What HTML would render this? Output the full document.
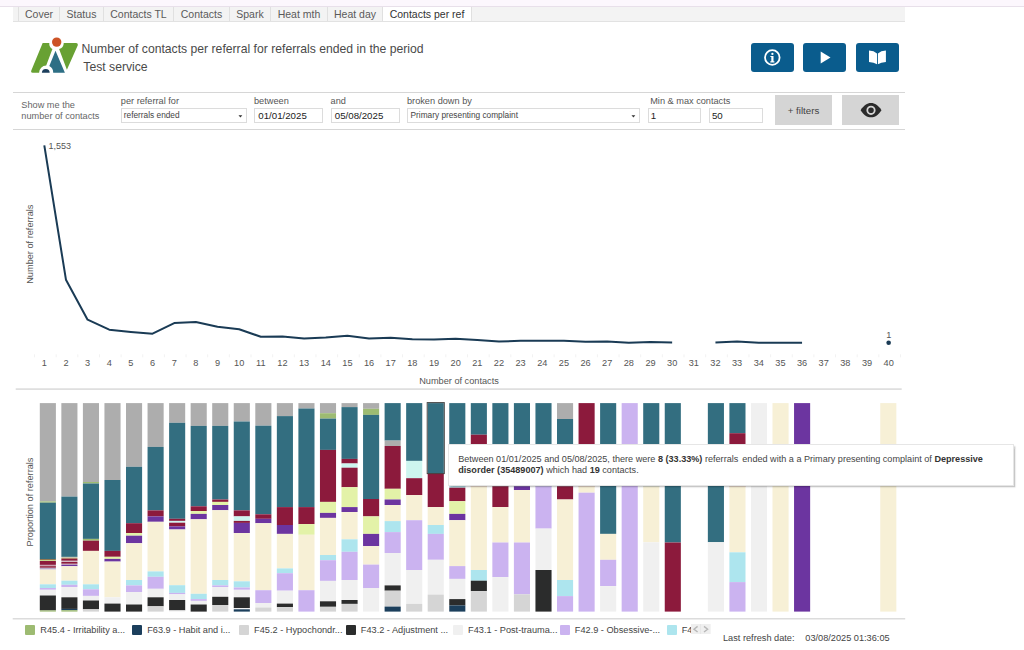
<!DOCTYPE html>
<html><head><meta charset="utf-8">
<style>
html,body{margin:0;padding:0;}
body{width:1024px;height:650px;overflow:hidden;position:relative;background:#fff;font-family:"Liberation Sans",sans-serif;}
.abs{position:absolute;}
#strip{position:absolute;left:0;top:0;width:1024px;height:6px;background:#fcf7fd;border-bottom:1px solid #e8e0ea;}
#tabbar{position:absolute;left:13px;top:7px;width:891.5px;height:13.6px;background:#f3f3f3;border-bottom:1px solid #e2e2e2;}
.tab{position:absolute;top:7px;height:13.6px;line-height:14px;font-size:10.5px;color:#5a5a5a;text-align:center;box-sizing:border-box;border-left:1px solid #e0e0e0;white-space:nowrap;}
.tab.act{background:#fff;color:#333;border-right:1px solid #e0e0e0;height:14.3px;}
.title{position:absolute;left:81.5px;font-size:12.2px;color:#4a4a4a;white-space:nowrap;}
.btn{position:absolute;top:43.1px;width:43px;height:29px;background:#0a5c8d;border-radius:3px;}
.hline{position:absolute;left:13px;width:892px;height:1px;background:#d6d6d6;}
.flab{position:absolute;font-size:9.2px;color:#555;white-space:nowrap;}
.inp{position:absolute;top:108.3px;height:14.6px;box-sizing:border-box;border:1px solid #dcdcdc;background:#fff;font-size:9.7px;color:#222;line-height:13px;padding-left:3px;white-space:nowrap;overflow:hidden;}
.sel{font-size:8.3px;color:#444;padding-left:2.5px;line-height:13.8px;}
.gbtn{position:absolute;top:95.3px;height:29.3px;background:#d5d5d5;}
.lsq{position:absolute;top:624.8px;width:10px;height:10px;border-radius:1px;}
.ltx{position:absolute;top:624.6px;font-size:9.2px;color:#444;white-space:nowrap;line-height:11px;}
svg text{font-family:"Liberation Sans",sans-serif;}
</style></head><body>
<div id="strip"></div>
<div id="tabbar"></div>
<div class="tab" style="left:18.00px;width:41.00px">Cover</div>
<div class="tab" style="left:59.00px;width:44.00px">Status</div>
<div class="tab" style="left:103.00px;width:70.00px">Contacts TL</div>
<div class="tab" style="left:173.00px;width:56.00px">Contacts</div>
<div class="tab" style="left:229.00px;width:41.00px">Spark</div>
<div class="tab" style="left:270.00px;width:57.00px">Heat mth</div>
<div class="tab" style="left:327.00px;width:55.00px">Heat day</div>
<div class="tab act" style="left:382.00px;width:90.00px">Contacts per ref</div>

<svg class="abs" style="left:0;top:0" width="120" height="90" viewBox="0 0 120 90">
  <path d="M42.66,42.9 L49.3,42.9 A6.6,6.6 0 0 0 52.4,49.1 L46.2,65.5 A7.3,7.3 0 0 0 39.1,72.8 L32.6,72.8 Q30.6,72.8 31.3,70.6 Z" fill="#68a133"/>
  <path d="M63.75,42.9 L76.3,42.9 Q78.4,43.2 77.8,45.2 L66.9,69.8 L59.1,49.1 A6.6,6.6 0 0 0 63.75,42.9 Z" fill="#68a133"/>
  <path d="M55.5,50.7 L64.9,72.8 L53.2,72.8 A7.4,7.4 0 0 0 49.3,66.1 Z" fill="#2e6f85"/>
  <path d="M41.9,72.8 A3.9,3.9 0 0 1 49.7,72.8 Z" fill="#1c3f5c"/>
  <circle cx="56.7" cy="42.1" r="4.7" fill="#cd5326"/>
</svg>
<div class="title" style="top:42px">Number of contacts per referral for referrals ended in the period</div>
<div class="title" style="top:60px;left:83.3px">Test service</div>
<div class="btn" style="left:750.8px"><svg width="43" height="29" viewBox="0 0 43 29"><circle cx="21.3" cy="14.5" r="7.3" fill="none" stroke="#fff" stroke-width="1.8"/><circle cx="21.4" cy="10.9" r="1.15" fill="#fff"/><path d="M19.4,13 L22.5,13 L22.5,18.3 L23.4,18.3 L23.4,19.4 L19.3,19.4 L19.3,18.3 L20.3,18.3 L20.3,14 L19.4,14 Z" fill="#fff"/></svg></div>
<div class="btn" style="left:803.2px"><svg width="43" height="29" viewBox="0 0 43 29"><path d="M17.7,8.4 L27.5,14.5 L17.7,20.6 Z" fill="#fff"/></svg></div>
<div class="btn" style="left:855.9px"><svg width="43" height="29" viewBox="0 0 43 29"><path d="M13,7.5 Q18,7.6 21,10.4 L21,21.3 Q18,19 13,18.9 Z M21.9,10.4 Q24.9,7.6 29.9,7.5 L29.9,18.9 Q24.9,19 21.9,21.3 Z" fill="#fff"/></svg></div>
<div class="hline" style="top:92px"></div>
<div class="hline" style="top:129px"></div>
<div class="flab" style="left:21.3px;top:99.5px;line-height:11px;color:#666">Show me the<br>number of contacts</div>
<div class="flab" style="left:120.8px;top:95.5px">per referral for</div>
<div class="inp sel" style="left:121px;width:126px;padding-left:1.8px">referrals ended<svg style="position:absolute;left:116.3px;top:6.2px" width="5" height="3" viewBox="0 0 5 3"><path d="M0.5,0.3 L4.3,0.3 L2.4,2.4 Z" fill="#333"/></svg></div>
<div class="flab" style="left:254px;top:95.5px">between</div>
<div class="inp" style="left:254.3px;width:69px">01/01/2025</div>
<div class="flab" style="left:330.6px;top:95.5px">and</div>
<div class="inp" style="left:330.8px;width:69px">05/08/2025</div>
<div class="flab" style="left:407px;top:95.5px">broken down by</div>
<div class="inp sel" style="left:407px;width:233.3px">Primary presenting complaint<svg style="position:absolute;left:223.3px;top:6.2px" width="5" height="3" viewBox="0 0 5 3"><path d="M0.5,0.3 L4.3,0.3 L2.4,2.4 Z" fill="#333"/></svg></div>
<div class="flab" style="left:650.2px;top:95.5px">Min &amp; max contacts</div>
<div class="inp" style="left:647.6px;width:53.8px;padding-left:2.2px">1</div>
<div class="inp" style="left:708.7px;width:54px;padding-left:2.2px">50</div>
<div class="gbtn" style="left:775px;width:57px"><div style="position:absolute;left:0;right:0;top:9.4px;text-align:center;font-size:9.7px;color:#444">+ filters</div></div>
<div class="gbtn" style="left:842px;width:57px"><svg width="57" height="29" viewBox="0 0 57 29"><path d="M18.6,15.2 C22,10.2 25,8.1 29,8.1 C33,8.1 36,10.2 39.5,15.2 C36,20.3 33,22.3 29,22.3 C25,22.3 22,20.3 18.6,15.2 Z" fill="#2b2b2b"/><circle cx="29" cy="15.3" r="3.7" fill="none" stroke="#d5d5d5" stroke-width="1.8"/></svg></div>

<svg class="abs" style="left:0;top:0" width="1024" height="650" viewBox="0 0 1024 650">
<g fill="#555" font-size="9.2">
<text x="44.30" y="365.7" text-anchor="middle">1</text>
<text x="65.95" y="365.7" text-anchor="middle">2</text>
<text x="87.60" y="365.7" text-anchor="middle">3</text>
<text x="109.25" y="365.7" text-anchor="middle">4</text>
<text x="130.90" y="365.7" text-anchor="middle">5</text>
<text x="152.55" y="365.7" text-anchor="middle">6</text>
<text x="174.20" y="365.7" text-anchor="middle">7</text>
<text x="195.85" y="365.7" text-anchor="middle">8</text>
<text x="217.50" y="365.7" text-anchor="middle">9</text>
<text x="239.15" y="365.7" text-anchor="middle">10</text>
<text x="260.80" y="365.7" text-anchor="middle">11</text>
<text x="282.45" y="365.7" text-anchor="middle">12</text>
<text x="304.10" y="365.7" text-anchor="middle">13</text>
<text x="325.75" y="365.7" text-anchor="middle">14</text>
<text x="347.40" y="365.7" text-anchor="middle">15</text>
<text x="369.05" y="365.7" text-anchor="middle">16</text>
<text x="390.70" y="365.7" text-anchor="middle">17</text>
<text x="412.35" y="365.7" text-anchor="middle">18</text>
<text x="434.00" y="365.7" text-anchor="middle">19</text>
<text x="455.65" y="365.7" text-anchor="middle">20</text>
<text x="477.30" y="365.7" text-anchor="middle">21</text>
<text x="498.95" y="365.7" text-anchor="middle">22</text>
<text x="520.60" y="365.7" text-anchor="middle">23</text>
<text x="542.25" y="365.7" text-anchor="middle">24</text>
<text x="563.90" y="365.7" text-anchor="middle">25</text>
<text x="585.55" y="365.7" text-anchor="middle">26</text>
<text x="607.20" y="365.7" text-anchor="middle">27</text>
<text x="628.85" y="365.7" text-anchor="middle">28</text>
<text x="650.50" y="365.7" text-anchor="middle">29</text>
<text x="672.15" y="365.7" text-anchor="middle">30</text>
<text x="693.80" y="365.7" text-anchor="middle">31</text>
<text x="715.45" y="365.7" text-anchor="middle">32</text>
<text x="737.10" y="365.7" text-anchor="middle">33</text>
<text x="758.75" y="365.7" text-anchor="middle">34</text>
<text x="780.40" y="365.7" text-anchor="middle">35</text>
<text x="802.05" y="365.7" text-anchor="middle">36</text>
<text x="823.70" y="365.7" text-anchor="middle">37</text>
<text x="845.35" y="365.7" text-anchor="middle">38</text>
<text x="867.00" y="365.7" text-anchor="middle">39</text>
<text x="888.65" y="365.7" text-anchor="middle">40</text>
<text x="48.4" y="148.6" text-anchor="start" font-size="9">1,553</text>
<text x="888.8" y="337.5" text-anchor="middle">1</text>
<text x="459" y="383.9" text-anchor="middle">Number of contacts</text>
<text transform="translate(32.6,244.2) rotate(-90)" text-anchor="middle">Number of referrals</text>
<text transform="translate(33.4,502) rotate(-90)" text-anchor="middle">Proportion of referrals</text>
</g>
<rect x="34.00" y="354.3" width="1" height="3" fill="#f2f2f2"/>
<rect x="55.65" y="354.3" width="1" height="3" fill="#f2f2f2"/>
<rect x="77.30" y="354.3" width="1" height="3" fill="#f2f2f2"/>
<rect x="98.95" y="354.3" width="1" height="3" fill="#f2f2f2"/>
<rect x="120.60" y="354.3" width="1" height="3" fill="#f2f2f2"/>
<rect x="142.25" y="354.3" width="1" height="3" fill="#f2f2f2"/>
<rect x="163.90" y="354.3" width="1" height="3" fill="#f2f2f2"/>
<rect x="185.55" y="354.3" width="1" height="3" fill="#f2f2f2"/>
<rect x="207.20" y="354.3" width="1" height="3" fill="#f2f2f2"/>
<rect x="228.85" y="354.3" width="1" height="3" fill="#f2f2f2"/>
<rect x="250.50" y="354.3" width="1" height="3" fill="#f2f2f2"/>
<rect x="272.15" y="354.3" width="1" height="3" fill="#f2f2f2"/>
<rect x="293.80" y="354.3" width="1" height="3" fill="#f2f2f2"/>
<rect x="315.45" y="354.3" width="1" height="3" fill="#f2f2f2"/>
<rect x="337.10" y="354.3" width="1" height="3" fill="#f2f2f2"/>
<rect x="358.75" y="354.3" width="1" height="3" fill="#f2f2f2"/>
<rect x="380.40" y="354.3" width="1" height="3" fill="#f2f2f2"/>
<rect x="402.05" y="354.3" width="1" height="3" fill="#f2f2f2"/>
<rect x="423.70" y="354.3" width="1" height="3" fill="#f2f2f2"/>
<rect x="445.35" y="354.3" width="1" height="3" fill="#f2f2f2"/>
<rect x="467.00" y="354.3" width="1" height="3" fill="#f2f2f2"/>
<rect x="488.65" y="354.3" width="1" height="3" fill="#f2f2f2"/>
<rect x="510.30" y="354.3" width="1" height="3" fill="#f2f2f2"/>
<rect x="531.95" y="354.3" width="1" height="3" fill="#f2f2f2"/>
<rect x="553.60" y="354.3" width="1" height="3" fill="#f2f2f2"/>
<rect x="575.25" y="354.3" width="1" height="3" fill="#f2f2f2"/>
<rect x="596.90" y="354.3" width="1" height="3" fill="#f2f2f2"/>
<rect x="618.55" y="354.3" width="1" height="3" fill="#f2f2f2"/>
<rect x="640.20" y="354.3" width="1" height="3" fill="#f2f2f2"/>
<rect x="661.85" y="354.3" width="1" height="3" fill="#f2f2f2"/>
<rect x="683.50" y="354.3" width="1" height="3" fill="#f2f2f2"/>
<rect x="705.15" y="354.3" width="1" height="3" fill="#f2f2f2"/>
<rect x="726.80" y="354.3" width="1" height="3" fill="#f2f2f2"/>
<rect x="748.45" y="354.3" width="1" height="3" fill="#f2f2f2"/>
<rect x="770.10" y="354.3" width="1" height="3" fill="#f2f2f2"/>
<rect x="791.75" y="354.3" width="1" height="3" fill="#f2f2f2"/>
<rect x="813.40" y="354.3" width="1" height="3" fill="#f2f2f2"/>
<rect x="835.05" y="354.3" width="1" height="3" fill="#f2f2f2"/>
<rect x="856.70" y="354.3" width="1" height="3" fill="#f2f2f2"/>
<rect x="878.35" y="354.3" width="1" height="3" fill="#f2f2f2"/>
<rect x="900.00" y="354.3" width="1" height="3" fill="#f2f2f2"/>
<polyline points="44.30,145.3 65.95,279.7 87.60,319.7 109.25,329.7 130.90,331.9 152.55,333.7 174.20,323.1 195.85,321.9 217.50,326.8 239.15,329.2 260.80,336.8 282.45,336.4 304.10,338.4 325.75,337.5 347.40,335.8 369.05,338.4 390.70,337.8 412.35,339.3 434.00,339.6 455.65,338.7 477.30,339.9 498.95,341.6 520.60,340.8 542.25,340.8 563.90,340.8 585.55,341.8 607.20,341.4 628.85,342.8 650.50,342.1 672.15,342.5" fill="none" stroke="#1a3b55" stroke-width="2" stroke-linejoin="round"/>
<polyline points="715.45,342.5 737.10,341.4 758.75,342.8 780.40,342.8 802.05,342.8" fill="none" stroke="#1a3b55" stroke-width="2" stroke-linejoin="round"/>
<circle cx="888.65" cy="342.8" r="2.3" fill="#1a3b55"/>
<rect x="15.7" y="388.3" width="886" height="1.6" fill="#dcdcdc"/>
<rect x="39.80" y="403.10" width="16.1" height="98.30" fill="#adadad"/>
<rect x="39.80" y="501.40" width="16.1" height="1.30" fill="#9dbb72"/>
<rect x="39.80" y="502.70" width="16.1" height="56.40" fill="#336e80"/>
<rect x="39.80" y="559.10" width="16.1" height="0.90" fill="#8a6a40"/>
<rect x="39.80" y="560.00" width="16.1" height="1.00" fill="#c8d890"/>
<rect x="39.80" y="561.00" width="16.1" height="3.90" fill="#8c1a3c"/>
<rect x="39.80" y="564.90" width="16.1" height="1.10" fill="#c8a0b0"/>
<rect x="39.80" y="566.00" width="16.1" height="1.90" fill="#a04058"/>
<rect x="39.80" y="567.90" width="16.1" height="1.70" fill="#b8a8c8"/>
<rect x="39.80" y="569.60" width="16.1" height="14.70" fill="#f7f0d6"/>
<rect x="39.80" y="584.30" width="16.1" height="3.70" fill="#ade5ee"/>
<rect x="39.80" y="588.00" width="16.1" height="1.80" fill="#cbb3f0"/>
<rect x="39.80" y="589.80" width="16.1" height="5.70" fill="#f0f0f0"/>
<rect x="39.80" y="595.50" width="16.1" height="14.90" fill="#2b2c2c"/>
<rect x="39.80" y="610.40" width="16.1" height="1.20" fill="#9dbb72"/>
<rect x="61.35" y="403.10" width="16.1" height="93.50" fill="#adadad"/>
<rect x="61.35" y="496.60" width="16.1" height="60.30" fill="#336e80"/>
<rect x="61.35" y="556.90" width="16.1" height="1.10" fill="#c8c8b0"/>
<rect x="61.35" y="558.00" width="16.1" height="0.90" fill="#b08060"/>
<rect x="61.35" y="558.90" width="16.1" height="1.90" fill="#8c1a3c"/>
<rect x="61.35" y="560.80" width="16.1" height="1.10" fill="#d8c8d0"/>
<rect x="61.35" y="561.90" width="16.1" height="1.90" fill="#8c1a3c"/>
<rect x="61.35" y="563.80" width="16.1" height="0.90" fill="#d0b0b8"/>
<rect x="61.35" y="564.70" width="16.1" height="1.50" fill="#6c35a0"/>
<rect x="61.35" y="566.20" width="16.1" height="14.50" fill="#f7f0d6"/>
<rect x="61.35" y="580.70" width="16.1" height="4.10" fill="#ade5ee"/>
<rect x="61.35" y="584.80" width="16.1" height="2.20" fill="#cbb3f0"/>
<rect x="61.35" y="587.00" width="16.1" height="10.30" fill="#f0f0f0"/>
<rect x="61.35" y="597.30" width="16.1" height="11.60" fill="#2b2c2c"/>
<rect x="61.35" y="608.90" width="16.1" height="1.30" fill="#1c3f5c"/>
<rect x="61.35" y="610.20" width="16.1" height="1.40" fill="#9dbb72"/>
<rect x="82.90" y="403.10" width="16.1" height="78.90" fill="#adadad"/>
<rect x="82.90" y="482.00" width="16.1" height="1.50" fill="#9dbb72"/>
<rect x="82.90" y="483.50" width="16.1" height="55.40" fill="#336e80"/>
<rect x="82.90" y="538.90" width="16.1" height="1.80" fill="#9dbb72"/>
<rect x="82.90" y="540.70" width="16.1" height="10.20" fill="#8c1a3c"/>
<rect x="82.90" y="550.90" width="16.1" height="33.40" fill="#f7f0d6"/>
<rect x="82.90" y="584.30" width="16.1" height="5.00" fill="#ade5ee"/>
<rect x="82.90" y="589.30" width="16.1" height="6.60" fill="#cbb3f0"/>
<rect x="82.90" y="595.90" width="16.1" height="4.60" fill="#f0f0f0"/>
<rect x="82.90" y="600.50" width="16.1" height="8.80" fill="#2b2c2c"/>
<rect x="82.90" y="609.30" width="16.1" height="2.30" fill="#d5d5d5"/>
<rect x="104.45" y="403.10" width="16.1" height="76.90" fill="#adadad"/>
<rect x="104.45" y="480.00" width="16.1" height="70.90" fill="#336e80"/>
<rect x="104.45" y="550.90" width="16.1" height="5.90" fill="#8c1a3c"/>
<rect x="104.45" y="556.80" width="16.1" height="2.10" fill="#e3f2a8"/>
<rect x="104.45" y="558.90" width="16.1" height="2.70" fill="#6c35a0"/>
<rect x="104.45" y="561.60" width="16.1" height="35.70" fill="#f7f0d6"/>
<rect x="104.45" y="597.30" width="16.1" height="6.30" fill="#f0f0f0"/>
<rect x="104.45" y="603.60" width="16.1" height="8.00" fill="#2b2c2c"/>
<rect x="126.00" y="403.10" width="16.1" height="63.70" fill="#adadad"/>
<rect x="126.00" y="466.80" width="16.1" height="56.40" fill="#336e80"/>
<rect x="126.00" y="523.20" width="16.1" height="9.80" fill="#8c1a3c"/>
<rect x="126.00" y="533.00" width="16.1" height="2.70" fill="#e3f2a8"/>
<rect x="126.00" y="535.70" width="16.1" height="7.50" fill="#6c35a0"/>
<rect x="126.00" y="543.20" width="16.1" height="36.80" fill="#f7f0d6"/>
<rect x="126.00" y="580.00" width="16.1" height="5.40" fill="#ade5ee"/>
<rect x="126.00" y="585.40" width="16.1" height="6.60" fill="#cbb3f0"/>
<rect x="126.00" y="592.00" width="16.1" height="12.50" fill="#f0f0f0"/>
<rect x="126.00" y="604.50" width="16.1" height="7.10" fill="#2b2c2c"/>
<rect x="147.55" y="403.10" width="16.1" height="43.80" fill="#adadad"/>
<rect x="147.55" y="446.90" width="16.1" height="63.50" fill="#336e80"/>
<rect x="147.55" y="510.40" width="16.1" height="6.00" fill="#8c1a3c"/>
<rect x="147.55" y="516.40" width="16.1" height="5.40" fill="#6c35a0"/>
<rect x="147.55" y="521.80" width="16.1" height="49.60" fill="#f7f0d6"/>
<rect x="147.55" y="571.40" width="16.1" height="5.40" fill="#ade5ee"/>
<rect x="147.55" y="576.80" width="16.1" height="12.00" fill="#cbb3f0"/>
<rect x="147.55" y="588.80" width="16.1" height="8.50" fill="#f0f0f0"/>
<rect x="147.55" y="597.30" width="16.1" height="9.00" fill="#2b2c2c"/>
<rect x="147.55" y="606.30" width="16.1" height="5.30" fill="#d5d5d5"/>
<rect x="169.10" y="403.10" width="16.1" height="19.70" fill="#adadad"/>
<rect x="169.10" y="422.80" width="16.1" height="96.00" fill="#336e80"/>
<rect x="169.10" y="518.80" width="16.1" height="2.10" fill="#8c1a3c"/>
<rect x="169.10" y="520.90" width="16.1" height="1.80" fill="#cdf5ef"/>
<rect x="169.10" y="522.70" width="16.1" height="3.70" fill="#8c1a3c"/>
<rect x="169.10" y="526.40" width="16.1" height="3.10" fill="#6c35a0"/>
<rect x="169.10" y="529.50" width="16.1" height="55.70" fill="#f7f0d6"/>
<rect x="169.10" y="585.20" width="16.1" height="7.70" fill="#ade5ee"/>
<rect x="169.10" y="592.90" width="16.1" height="1.40" fill="#cbb3f0"/>
<rect x="169.10" y="594.30" width="16.1" height="5.70" fill="#f0f0f0"/>
<rect x="169.10" y="600.00" width="16.1" height="10.40" fill="#2b2c2c"/>
<rect x="169.10" y="610.40" width="16.1" height="1.20" fill="#f0f0f0"/>
<rect x="190.65" y="403.10" width="16.1" height="22.80" fill="#adadad"/>
<rect x="190.65" y="425.90" width="16.1" height="80.40" fill="#336e80"/>
<rect x="190.65" y="506.30" width="16.1" height="4.80" fill="#8c1a3c"/>
<rect x="190.65" y="511.10" width="16.1" height="2.80" fill="#e3f2a8"/>
<rect x="190.65" y="513.90" width="16.1" height="5.40" fill="#6c35a0"/>
<rect x="190.65" y="519.30" width="16.1" height="74.50" fill="#f7f0d6"/>
<rect x="190.65" y="593.80" width="16.1" height="5.30" fill="#ade5ee"/>
<rect x="190.65" y="599.10" width="16.1" height="1.80" fill="#cbb3f0"/>
<rect x="190.65" y="600.90" width="16.1" height="3.60" fill="#f0f0f0"/>
<rect x="190.65" y="604.50" width="16.1" height="7.10" fill="#2b2c2c"/>
<rect x="212.20" y="403.10" width="16.1" height="22.80" fill="#adadad"/>
<rect x="212.20" y="425.90" width="16.1" height="73.60" fill="#336e80"/>
<rect x="212.20" y="499.50" width="16.1" height="2.40" fill="#8c1a3c"/>
<rect x="212.20" y="501.90" width="16.1" height="3.10" fill="#e3f2a8"/>
<rect x="212.20" y="505.00" width="16.1" height="5.20" fill="#6c35a0"/>
<rect x="212.20" y="510.20" width="16.1" height="69.80" fill="#f7f0d6"/>
<rect x="212.20" y="580.00" width="16.1" height="5.40" fill="#ade5ee"/>
<rect x="212.20" y="585.40" width="16.1" height="1.60" fill="#cbb3f0"/>
<rect x="212.20" y="587.00" width="16.1" height="9.80" fill="#f0f0f0"/>
<rect x="212.20" y="596.80" width="16.1" height="8.20" fill="#2b2c2c"/>
<rect x="212.20" y="605.00" width="16.1" height="6.60" fill="#d5d5d5"/>
<rect x="233.75" y="403.10" width="16.1" height="18.40" fill="#adadad"/>
<rect x="233.75" y="421.50" width="16.1" height="88.90" fill="#336e80"/>
<rect x="233.75" y="510.40" width="16.1" height="6.00" fill="#8c1a3c"/>
<rect x="233.75" y="516.40" width="16.1" height="4.50" fill="#cdf5ef"/>
<rect x="233.75" y="520.90" width="16.1" height="2.00" fill="#8c1a3c"/>
<rect x="233.75" y="522.90" width="16.1" height="10.10" fill="#6c35a0"/>
<rect x="233.75" y="533.00" width="16.1" height="48.30" fill="#f7f0d6"/>
<rect x="233.75" y="581.30" width="16.1" height="6.20" fill="#ade5ee"/>
<rect x="233.75" y="587.50" width="16.1" height="2.30" fill="#cbb3f0"/>
<rect x="233.75" y="589.80" width="16.1" height="7.50" fill="#f0f0f0"/>
<rect x="233.75" y="597.30" width="16.1" height="10.70" fill="#2b2c2c"/>
<rect x="233.75" y="608.00" width="16.1" height="1.30" fill="#f0f0f0"/>
<rect x="233.75" y="609.30" width="16.1" height="2.30" fill="#1c3f5c"/>
<rect x="255.30" y="403.10" width="16.1" height="22.60" fill="#adadad"/>
<rect x="255.30" y="425.70" width="16.1" height="88.60" fill="#336e80"/>
<rect x="255.30" y="514.30" width="16.1" height="4.50" fill="#8c1a3c"/>
<rect x="255.30" y="518.80" width="16.1" height="4.40" fill="#6c35a0"/>
<rect x="255.30" y="523.20" width="16.1" height="67.00" fill="#f7f0d6"/>
<rect x="255.30" y="590.20" width="16.1" height="12.80" fill="#cbb3f0"/>
<rect x="255.30" y="603.00" width="16.1" height="4.50" fill="#f0f0f0"/>
<rect x="255.30" y="607.50" width="16.1" height="4.10" fill="#d5d5d5"/>
<rect x="276.85" y="403.10" width="16.1" height="13.00" fill="#adadad"/>
<rect x="276.85" y="416.10" width="16.1" height="91.00" fill="#336e80"/>
<rect x="276.85" y="507.10" width="16.1" height="17.90" fill="#8c1a3c"/>
<rect x="276.85" y="525.00" width="16.1" height="8.90" fill="#6c35a0"/>
<rect x="276.85" y="533.90" width="16.1" height="34.50" fill="#f7f0d6"/>
<rect x="276.85" y="568.40" width="16.1" height="4.80" fill="#ade5ee"/>
<rect x="276.85" y="573.20" width="16.1" height="17.50" fill="#cbb3f0"/>
<rect x="276.85" y="590.70" width="16.1" height="12.90" fill="#f0f0f0"/>
<rect x="276.85" y="603.60" width="16.1" height="3.50" fill="#2b2c2c"/>
<rect x="276.85" y="607.10" width="16.1" height="4.50" fill="#d5d5d5"/>
<rect x="298.40" y="403.10" width="16.1" height="5.40" fill="#adadad"/>
<rect x="298.40" y="408.50" width="16.1" height="98.60" fill="#336e80"/>
<rect x="298.40" y="507.10" width="16.1" height="17.00" fill="#8c1a3c"/>
<rect x="298.40" y="524.10" width="16.1" height="10.70" fill="#e3f2a8"/>
<rect x="298.40" y="534.80" width="16.1" height="55.40" fill="#f7f0d6"/>
<rect x="298.40" y="590.20" width="16.1" height="21.40" fill="#cbb3f0"/>
<rect x="319.95" y="403.10" width="16.1" height="10.10" fill="#adadad"/>
<rect x="319.95" y="413.20" width="16.1" height="5.40" fill="#9dbb72"/>
<rect x="319.95" y="418.60" width="16.1" height="31.30" fill="#336e80"/>
<rect x="319.95" y="449.90" width="16.1" height="52.00" fill="#8c1a3c"/>
<rect x="319.95" y="501.90" width="16.1" height="11.00" fill="#e3f2a8"/>
<rect x="319.95" y="512.90" width="16.1" height="5.00" fill="#6c35a0"/>
<rect x="319.95" y="517.90" width="16.1" height="37.10" fill="#f7f0d6"/>
<rect x="319.95" y="555.00" width="16.1" height="5.20" fill="#ade5ee"/>
<rect x="319.95" y="560.20" width="16.1" height="20.70" fill="#cbb3f0"/>
<rect x="319.95" y="580.90" width="16.1" height="20.40" fill="#f0f0f0"/>
<rect x="319.95" y="601.30" width="16.1" height="5.50" fill="#2b2c2c"/>
<rect x="319.95" y="606.80" width="16.1" height="4.80" fill="#d5d5d5"/>
<rect x="341.50" y="403.10" width="16.1" height="4.00" fill="#adadad"/>
<rect x="341.50" y="407.10" width="16.1" height="51.80" fill="#336e80"/>
<rect x="341.50" y="458.90" width="16.1" height="4.60" fill="#8c1a3c"/>
<rect x="341.50" y="463.50" width="16.1" height="4.20" fill="#cdf5ef"/>
<rect x="341.50" y="467.70" width="16.1" height="19.50" fill="#8c1a3c"/>
<rect x="341.50" y="487.20" width="16.1" height="19.90" fill="#e3f2a8"/>
<rect x="341.50" y="507.10" width="16.1" height="4.90" fill="#6c35a0"/>
<rect x="341.50" y="512.00" width="16.1" height="27.30" fill="#f7f0d6"/>
<rect x="341.50" y="539.30" width="16.1" height="12.50" fill="#ade5ee"/>
<rect x="341.50" y="551.80" width="16.1" height="28.20" fill="#cbb3f0"/>
<rect x="341.50" y="580.00" width="16.1" height="20.00" fill="#f0f0f0"/>
<rect x="341.50" y="600.00" width="16.1" height="3.90" fill="#2b2c2c"/>
<rect x="341.50" y="603.90" width="16.1" height="7.70" fill="#d5d5d5"/>
<rect x="363.05" y="403.10" width="16.1" height="5.70" fill="#adadad"/>
<rect x="363.05" y="408.80" width="16.1" height="6.10" fill="#9dbb72"/>
<rect x="363.05" y="414.90" width="16.1" height="84.10" fill="#336e80"/>
<rect x="363.05" y="499.00" width="16.1" height="17.40" fill="#8c1a3c"/>
<rect x="363.05" y="516.40" width="16.1" height="17.50" fill="#e3f2a8"/>
<rect x="363.05" y="533.90" width="16.1" height="12.20" fill="#6c35a0"/>
<rect x="363.05" y="546.10" width="16.1" height="18.50" fill="#f7f0d6"/>
<rect x="363.05" y="564.60" width="16.1" height="23.40" fill="#cbb3f0"/>
<rect x="363.05" y="588.00" width="16.1" height="23.60" fill="#f0f0f0"/>
<rect x="384.60" y="403.10" width="16.1" height="37.50" fill="#336e80"/>
<rect x="384.60" y="440.60" width="16.1" height="5.40" fill="#adadad"/>
<rect x="384.60" y="446.00" width="16.1" height="42.80" fill="#8c1a3c"/>
<rect x="384.60" y="488.80" width="16.1" height="10.70" fill="#e3f2a8"/>
<rect x="384.60" y="499.50" width="16.1" height="5.50" fill="#6c35a0"/>
<rect x="384.60" y="505.00" width="16.1" height="16.10" fill="#f7f0d6"/>
<rect x="384.60" y="521.10" width="16.1" height="11.00" fill="#ade5ee"/>
<rect x="384.60" y="532.10" width="16.1" height="20.90" fill="#cbb3f0"/>
<rect x="384.60" y="553.00" width="16.1" height="32.40" fill="#f0f0f0"/>
<rect x="384.60" y="585.40" width="16.1" height="5.30" fill="#2b2c2c"/>
<rect x="384.60" y="590.70" width="16.1" height="15.90" fill="#d5d5d5"/>
<rect x="384.60" y="606.60" width="16.1" height="5.00" fill="#1c3f5c"/>
<rect x="406.15" y="403.10" width="16.1" height="57.80" fill="#336e80"/>
<rect x="406.15" y="460.90" width="16.1" height="17.30" fill="#cdf5ef"/>
<rect x="406.15" y="478.20" width="16.1" height="16.90" fill="#8c1a3c"/>
<rect x="406.15" y="495.10" width="16.1" height="25.10" fill="#f7f0d6"/>
<rect x="406.15" y="520.20" width="16.1" height="49.80" fill="#cbb3f0"/>
<rect x="406.15" y="570.00" width="16.1" height="33.90" fill="#f0f0f0"/>
<rect x="406.15" y="603.90" width="16.1" height="7.70" fill="#d5d5d5"/>
<rect x="427.70" y="403.10" width="16.1" height="70.00" fill="#336e80"/>
<rect x="427.70" y="473.10" width="16.1" height="34.00" fill="#8c1a3c"/>
<rect x="427.70" y="507.10" width="16.1" height="17.90" fill="#f7f0d6"/>
<rect x="427.70" y="525.00" width="16.1" height="8.90" fill="#ade5ee"/>
<rect x="427.70" y="533.90" width="16.1" height="25.90" fill="#cbb3f0"/>
<rect x="427.70" y="559.80" width="16.1" height="34.80" fill="#f0f0f0"/>
<rect x="427.70" y="594.60" width="16.1" height="17.00" fill="#d5d5d5"/>
<rect x="449.25" y="403.10" width="16.1" height="83.20" fill="#336e80"/>
<rect x="449.25" y="486.30" width="16.1" height="1.40" fill="#ade5ee"/>
<rect x="449.25" y="487.70" width="16.1" height="13.50" fill="#8c1a3c"/>
<rect x="449.25" y="501.20" width="16.1" height="12.70" fill="#e3f2a8"/>
<rect x="449.25" y="513.90" width="16.1" height="6.30" fill="#6c35a0"/>
<rect x="449.25" y="520.20" width="16.1" height="45.90" fill="#f7f0d6"/>
<rect x="449.25" y="566.10" width="16.1" height="12.80" fill="#cbb3f0"/>
<rect x="449.25" y="578.90" width="16.1" height="20.20" fill="#f0f0f0"/>
<rect x="449.25" y="599.10" width="16.1" height="6.30" fill="#2b2c2c"/>
<rect x="449.25" y="605.40" width="16.1" height="6.20" fill="#1c3f5c"/>
<rect x="470.80" y="403.10" width="16.1" height="31.60" fill="#336e80"/>
<rect x="470.80" y="434.70" width="16.1" height="51.60" fill="#8c1a3c"/>
<rect x="470.80" y="486.30" width="16.1" height="83.70" fill="#f7f0d6"/>
<rect x="470.80" y="570.00" width="16.1" height="10.70" fill="#ade5ee"/>
<rect x="470.80" y="580.70" width="16.1" height="10.40" fill="#2b2c2c"/>
<rect x="470.80" y="591.10" width="16.1" height="20.50" fill="#d5d5d5"/>
<rect x="492.35" y="403.10" width="16.1" height="83.20" fill="#336e80"/>
<rect x="492.35" y="486.30" width="16.1" height="20.80" fill="#8c1a3c"/>
<rect x="492.35" y="507.10" width="16.1" height="35.40" fill="#f7f0d6"/>
<rect x="492.35" y="542.50" width="16.1" height="34.60" fill="#cbb3f0"/>
<rect x="492.35" y="577.10" width="16.1" height="34.50" fill="#f0f0f0"/>
<rect x="513.90" y="403.10" width="16.1" height="83.20" fill="#336e80"/>
<rect x="513.90" y="486.30" width="16.1" height="3.70" fill="#6c35a0"/>
<rect x="513.90" y="490.00" width="16.1" height="52.50" fill="#f7f0d6"/>
<rect x="513.90" y="542.50" width="16.1" height="51.80" fill="#cbb3f0"/>
<rect x="513.90" y="594.30" width="16.1" height="17.30" fill="#d5d5d5"/>
<rect x="535.45" y="403.10" width="16.1" height="83.20" fill="#336e80"/>
<rect x="535.45" y="486.30" width="16.1" height="42.30" fill="#cbb3f0"/>
<rect x="535.45" y="528.60" width="16.1" height="41.40" fill="#f0f0f0"/>
<rect x="535.45" y="570.00" width="16.1" height="41.60" fill="#2b2c2c"/>
<rect x="557.00" y="403.10" width="16.1" height="15.90" fill="#adadad"/>
<rect x="557.00" y="419.00" width="16.1" height="67.30" fill="#336e80"/>
<rect x="557.00" y="486.30" width="16.1" height="13.20" fill="#8c1a3c"/>
<rect x="557.00" y="499.50" width="16.1" height="80.50" fill="#f7f0d6"/>
<rect x="557.00" y="580.00" width="16.1" height="16.10" fill="#ade5ee"/>
<rect x="557.00" y="596.10" width="16.1" height="15.50" fill="#cbb3f0"/>
<rect x="578.55" y="403.10" width="16.1" height="83.20" fill="#8c1a3c"/>
<rect x="578.55" y="486.30" width="16.1" height="6.40" fill="#f7f0d6"/>
<rect x="578.55" y="492.70" width="16.1" height="118.90" fill="#cbb3f0"/>
<rect x="600.10" y="403.10" width="16.1" height="130.80" fill="#336e80"/>
<rect x="600.10" y="533.90" width="16.1" height="25.90" fill="#f7f0d6"/>
<rect x="600.10" y="559.80" width="16.1" height="26.30" fill="#cbb3f0"/>
<rect x="600.10" y="586.10" width="16.1" height="25.50" fill="#f0f0f0"/>
<rect x="621.65" y="403.10" width="16.1" height="208.50" fill="#cbb3f0"/>
<rect x="643.20" y="403.10" width="16.1" height="83.20" fill="#336e80"/>
<rect x="643.20" y="486.30" width="16.1" height="56.00" fill="#f7f0d6"/>
<rect x="643.20" y="542.30" width="16.1" height="69.30" fill="#f0f0f0"/>
<rect x="664.75" y="403.10" width="16.1" height="139.40" fill="#336e80"/>
<rect x="664.75" y="542.50" width="16.1" height="69.10" fill="#8c1a3c"/>
<rect x="707.85" y="403.10" width="16.1" height="139.10" fill="#336e80"/>
<rect x="707.85" y="542.20" width="16.1" height="69.40" fill="#f0f0f0"/>
<rect x="729.40" y="403.10" width="16.1" height="30.10" fill="#336e80"/>
<rect x="729.40" y="433.20" width="16.1" height="53.10" fill="#8c1a3c"/>
<rect x="729.40" y="486.30" width="16.1" height="66.00" fill="#f7f0d6"/>
<rect x="729.40" y="552.30" width="16.1" height="29.80" fill="#ade5ee"/>
<rect x="729.40" y="582.10" width="16.1" height="29.50" fill="#cbb3f0"/>
<rect x="750.95" y="403.10" width="16.1" height="208.50" fill="#f0f0f0"/>
<rect x="772.50" y="403.10" width="16.1" height="208.50" fill="#f7f0d6"/>
<rect x="794.05" y="403.10" width="16.1" height="208.50" fill="#6c35a0"/>
<rect x="880.25" y="403.10" width="16.1" height="208.50" fill="#f7f0d6"/>
<rect x="427.20" y="402.6" width="17.1" height="71.00" fill="none" stroke="#444" stroke-width="1"/>
<rect x="12.7" y="618" width="892.5" height="1.5" fill="#dcdcdc"/>
</svg>

<div class="abs" style="left:448.2px;top:444.3px;width:566px;height:41.6px;box-sizing:border-box;background:#fff;border:1px solid #e6e6e6;box-shadow:1.5px 1.5px 1.5px rgba(0,0,0,0.22);"></div>
<div class="abs" style="left:458.2px;top:453.5px;font-size:9.1px;line-height:11.4px;color:#444;white-space:nowrap;">Between 01/01/2025 and 05/08/2025, there were <b style="color:#333">8</b> <b style="color:#333">(33.33%)</b> referrals</div>
<div class="abs" style="left:742.3px;top:453.5px;font-size:9.1px;line-height:11.4px;color:#444;white-space:nowrap;">ended with a a Primary presenting complaint of <b style="color:#333">Depressive</b></div>
<div class="abs" style="left:458.2px;top:464.9px;font-size:9.1px;line-height:11.4px;color:#444;white-space:nowrap;"><b style="color:#333">disorder (35489007)</b> which had <b style="color:#333">19</b> contacts.</div>

<div class="lsq" style="left:25.3px;background:#9dbb72"></div><div class="ltx" style="left:40.3px">R45.4 - Irritability a...</div>
<div class="lsq" style="left:132.4px;background:#1c3f5c"></div><div class="ltx" style="left:147.2px">F63.9 - Habit and i...</div>
<div class="lsq" style="left:239.4px;background:#d5d5d5"></div><div class="ltx" style="left:254.1px">F45.2 - Hypochondr...</div>
<div class="lsq" style="left:346px;background:#2b2c2c"></div><div class="ltx" style="left:360.8px">F43.2 - Adjustment ...</div>
<div class="lsq" style="left:452.6px;background:#f0f0f0"></div><div class="ltx" style="left:468.1px">F43.1 - Post-trauma...</div>
<div class="lsq" style="left:560.3px;background:#cbb3f0"></div><div class="ltx" style="left:574.8px">F42.9 - Obsessive-...</div>
<div class="lsq" style="left:667px;background:#ade5ee"></div><div class="ltx" style="left:681.7px">F4</div>

<svg class="abs" style="left:691px;top:623.6px" width="20" height="10" viewBox="0 0 20 10"><rect width="19.7" height="10" fill="#efefef"/><rect x="9.2" y="0" width="0.6" height="10" fill="#e2e2e2"/><path d="M6.6,2.4 L3,5.2 L6.6,8 M13,2.4 L16.6,5.2 L13,8" fill="none" stroke="#b8b8b8" stroke-width="1.4"/></svg>
<div class="abs" style="left:723px;top:632.5px;font-size:9.2px;color:#444;white-space:nowrap">Last refresh date:</div>
<div class="abs" style="left:805.3px;top:632.5px;font-size:9.2px;color:#444;white-space:nowrap">03/08/2025 01:36:05</div>
</body></html>
